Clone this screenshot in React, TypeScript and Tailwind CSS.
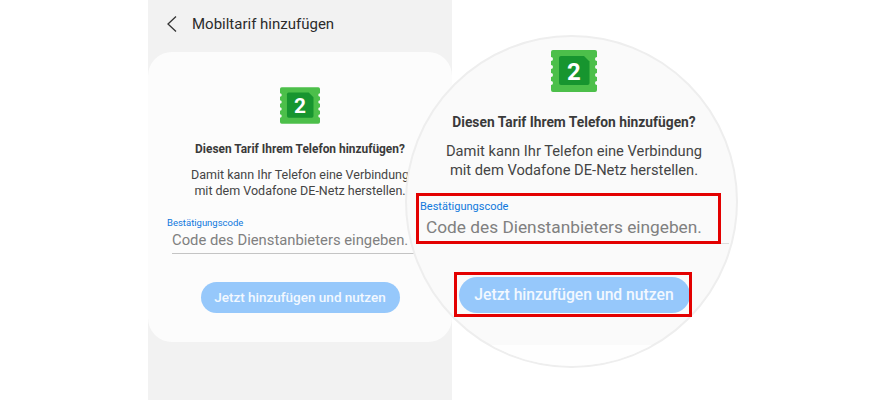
const SimIcon = ({ className }: { className: string }) => (
  <svg viewBox="0 0 46 42" className={className}>
    <path
      d="M2 0H44a2 2 0 0 1 2 2V7a2 2 0 0 0 0 4V15a2 2 0 0 0 0 4V23a2 2 0 0 0 0 4V31a2 2 0 0 0 0 4V40a2 2 0 0 1-2 2H2a2 2 0 0 1-2-2V35a2 2 0 0 0 0-4V27a2 2 0 0 0 0-4V19a2 2 0 0 0 0-4V11a2 2 0 0 0 0-4V2a2 2 0 0 1 2-2Z"
      fill="#4cbf4a"
    />
    <path
      d="M10 6H33L38.5 11.5V33a2 2 0 0 1-2 2H10a2 2 0 0 1-2-2V8a2 2 0 0 1 2-2Z"
      fill="#17952f"
    />
    <text
      x="23"
      y="29.5"
      textAnchor="middle"
      fontFamily="Roboto, sans-serif"
      fontWeight="700"
      fontSize="24"
      fill="#ffffff"
    >
      2
    </text>
  </svg>
);

const App = () => {
  return (
    <div className="relative h-[400px] w-[879px] overflow-hidden bg-white font-['Roboto',sans-serif]">
      <div className="ml-[148px] flex h-[400px] w-[304px] flex-col bg-[#f2f2f2]">
        <div className="flex h-[52px] items-center pb-[4px] pl-[18px]">
          <svg viewBox="0 0 12 18" className="h-[18px] w-[12px]" fill="none">
            <path d="M10 1.5 2 9l8 7.5" stroke="#333333" strokeWidth="1.3" />
          </svg>
          <span className="ml-[14px] text-[15px] text-[#2b2b2b]">Mobiltarif hinzufügen</span>
        </div>
        <div className="flex h-[290px] flex-col items-center rounded-[24px] bg-[#fcfcfc] pt-[35px]">
          <SimIcon className="h-[37px] w-[40px]" />
          <h2 className="mt-[17px] text-[11.9px] font-bold leading-[16px] text-[#3a3a3a]">
            Diesen Tarif Ihrem Telefon hinzufügen?
          </h2>
          <p className="mt-[10px] text-center text-[12.5px] leading-[16px] text-[#444444]">
            Damit kann Ihr Telefon eine Verbindung
            <br />
            mit dem Vodafone DE-Netz herstellen.
          </p>
          <div className="mt-[18px] w-full pl-[19px]">
            <div className="text-[9.5px] leading-[11px] text-[#0f78dc]">Bestätigungscode</div>
            <div className="mt-[2px] ml-[5px] border-b border-[#c4c4c4] pb-[3px] text-[14.8px] leading-[20px] whitespace-nowrap text-[#808080]">
              Code des Dienstanbieters eingeben.
            </div>
          </div>
          <button className="mt-[28px] h-[31px] w-[199px] rounded-full bg-[#96c8fb] text-[13.5px] font-medium text-[#f2f8ff]">
            Jetzt hinzufügen und nutzen
          </button>
        </div>
      </div>

      {/* magnifier */}
      <div className="absolute top-[35px] left-[405px] flex h-[333px] w-[333px] flex-col items-center overflow-hidden rounded-full border-2 border-[#eeeeee] bg-[#fafafa] pt-[13px] pl-[5px]">
        <SimIcon className="h-[42px] w-[46px] shrink-0" />
        <h2 className="mt-[21px] shrink-0 text-[13.8px] leading-[18px] font-bold text-[#3a3a3a]">
          Diesen Tarif Ihrem Telefon hinzufügen?
        </h2>
        <p className="mt-[11px] shrink-0 text-center text-[14.7px] leading-[19px] text-[#444444]">
          Damit kann Ihr Telefon eine Verbindung
          <br />
          mit dem Vodafone DE-Netz herstellen.
        </p>
        <div className="mt-[9px] h-[55px] w-full shrink-0 pl-[8px]">
          <div className="mt-[11px] text-[11px] leading-[14px] text-[#0f78dc]">Bestätigungscode</div>
          <div className="mt-[1px] ml-[6px] h-[29px] w-[303px] border-b border-[#dddddd] text-[17.3px] leading-[24px] whitespace-nowrap text-[#808080]">
            Code des Dienstanbieters eingeben.
          </div>
        </div>
        <button className="mt-[33px] h-[36px] w-[231px] shrink-0 rounded-full bg-[#96c8fb] text-[15.7px] font-medium text-[#f2f8ff]">
          Jetzt hinzufügen und nutzen
        </button>
        <div className="mt-[32px] h-[30px] w-[340px] shrink-0 bg-[#fefefe]" />
      </div>

      {/* red highlight boxes */}
      <div className="absolute top-[193px] left-[416px] h-[51px] w-[305px] border-[3px] border-[#e30000]" />
      <div className="absolute top-[272px] left-[454px] h-[45px] w-[238px] border-[3px] border-[#e30000]" />
    </div>
  );
};

export default App;
